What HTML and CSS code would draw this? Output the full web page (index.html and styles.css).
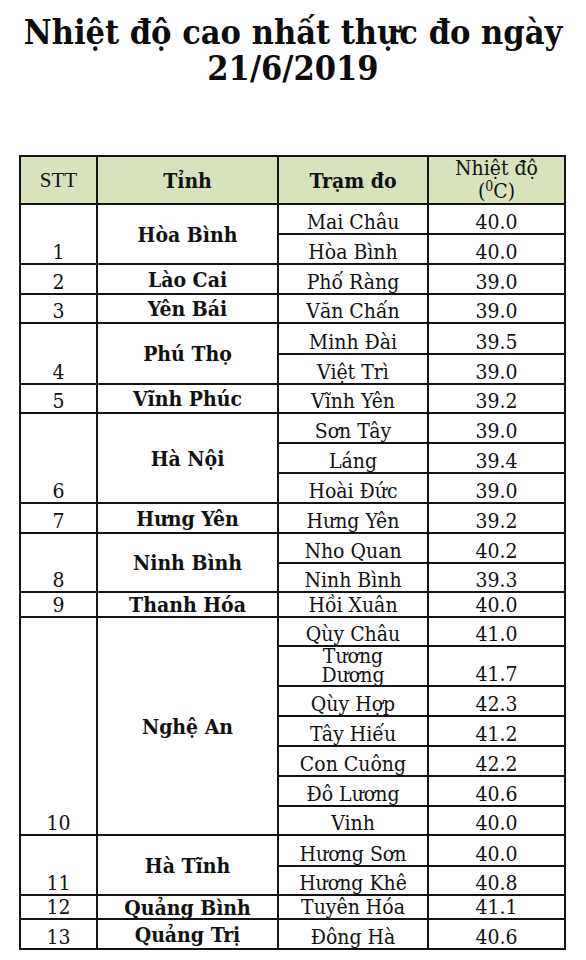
FILE: index.html
```html
<!DOCTYPE html>
<html lang="vi">
<head>
<meta charset="utf-8">
<title>Nhiệt độ cao nhất thực đo ngày 21/6/2019</title>
<link rel="stylesheet" href="styles.css">
</head>
<body>
<div class="page">
  <h1 class="title">Nhiệt độ cao nhất thực đo ngày<br>21/6/2019</h1>
  <table class="temps">
    <colgroup>
      <col class="c-stt"><col class="c-tinh"><col class="c-tram"><col class="c-nd">
    </colgroup>
    <thead>
      <tr class="h45">
        <th class="stt-h">STT</th>
        <th class="bold-h">Tỉnh</th>
        <th class="bold-h">Trạm đo</th>
        <th class="nd-h">Nhiệt độ<br>(<sup>0</sup>C)</th>
      </tr>
    </thead>
    <tbody>
      <tr class="h30"><td class="stt" rowspan="2">1</td><td class="tinh" rowspan="2">Hòa Bình</td><td class="tram">Mai Châu</td><td class="nd">40.0</td></tr>
      <tr class="h30"><td class="tram">Hòa Bình</td><td class="nd">40.0</td></tr>
      <tr class="h30"><td class="stt">2</td><td class="tinh">Lào Cai</td><td class="tram">Phố Ràng</td><td class="nd">39.0</td></tr>
      <tr class="h29"><td class="stt">3</td><td class="tinh">Yên Bái</td><td class="tram">Văn Chấn</td><td class="nd">39.0</td></tr>
      <tr class="h31"><td class="stt" rowspan="2">4</td><td class="tinh" rowspan="2">Phú Thọ</td><td class="tram">Minh Đài</td><td class="nd">39.5</td></tr>
      <tr class="h30"><td class="tram">Việt Trì</td><td class="nd">39.0</td></tr>
      <tr class="h29"><td class="stt">5</td><td class="tinh">Vĩnh Phúc</td><td class="tram">Vĩnh Yên</td><td class="nd">39.2</td></tr>
      <tr class="h30"><td class="stt" rowspan="3">6</td><td class="tinh" rowspan="3">Hà Nội</td><td class="tram">Sơn Tây</td><td class="nd">39.0</td></tr>
      <tr class="h30"><td class="tram">Láng</td><td class="nd">39.4</td></tr>
      <tr class="h30"><td class="tram">Hoài Đức</td><td class="nd">39.0</td></tr>
      <tr class="h30"><td class="stt">7</td><td class="tinh">Hưng Yên</td><td class="tram">Hưng Yên</td><td class="nd">39.2</td></tr>
      <tr class="h30"><td class="stt" rowspan="2">8</td><td class="tinh" rowspan="2">Ninh Bình</td><td class="tram">Nho Quan</td><td class="nd">40.2</td></tr>
      <tr class="h29"><td class="tram">Ninh Bình</td><td class="nd">39.3</td></tr>
      <tr class="h25"><td class="stt">9</td><td class="tinh">Thanh Hóa</td><td class="tram">Hồi Xuân</td><td class="nd">40.0</td></tr>
      <tr class="h29"><td class="stt" rowspan="7">10</td><td class="tinh" rowspan="7">Nghệ An</td><td class="tram">Qùy Châu</td><td class="nd">41.0</td></tr>
      <tr class="h39"><td class="tram two">Tương<br>Dương</td><td class="nd">41.7</td></tr>
      <tr class="h30"><td class="tram">Qùy Hợp</td><td class="nd">42.3</td></tr>
      <tr class="h30"><td class="tram">Tây Hiếu</td><td class="nd">41.2</td></tr>
      <tr class="h30"><td class="tram">Con Cuông</td><td class="nd">42.2</td></tr>
      <tr class="h30"><td class="tram">Đô Lương</td><td class="nd">40.6</td></tr>
      <tr class="h29"><td class="tram">Vinh</td><td class="nd">40.0</td></tr>
      <tr class="h31"><td class="stt" rowspan="2">11</td><td class="tinh" rowspan="2">Hà Tĩnh</td><td class="tram">Hương Sơn</td><td class="nd">40.0</td></tr>
      <tr class="h29"><td class="tram">Hương Khê</td><td class="nd">40.8</td></tr>
      <tr class="h24"><td class="stt">12</td><td class="tinh">Quảng Bình</td><td class="tram">Tuyên Hóa</td><td class="nd">41.1</td></tr>
      <tr class="h30"><td class="stt">13</td><td class="tinh">Quảng Trị</td><td class="tram">Đông Hà</td><td class="nd">40.6</td></tr>
    </tbody>
  </table>
</div>
</body>
</html>
```

FILE: styles.css
```css
html, body {
  margin: 0;
  padding: 0;
  background: #ffffff;
}

.page {
  width: 586px;
  height: 960px;
  overflow: hidden;
  font-family: "DejaVu Serif", "Liberation Serif", serif;
  font-stretch: semi-condensed;
  color: #111;
}

.title {
  margin: 14px 0 0 0;
  text-align: center;
  font-family: "DejaVu Serif", serif;
  font-stretch: semi-condensed;
  font-weight: bold;
  font-size: 34px;
  line-height: 36px;
  letter-spacing: 0;
  color: #0c0c0c;
}

.temps {
  margin: 69px 0 0 19px;
  width: 545px;
  border-collapse: collapse;
  table-layout: fixed;
}

.c-stt { width: 77px; }
.c-tinh { width: 181px; }
.c-tram { width: 150px; }
.c-nd { width: 137px; }

.temps th,
.temps td {
  border: 2px solid #141414;
  padding: 0;
  text-align: center;
  white-space: nowrap;
  overflow: visible;
}

.temps th {
  background: #d8e3bd;
  vertical-align: middle;
  font-size: 21px;
}

.stt-h {
  font-family: "Liberation Serif", serif;
  font-weight: normal;
  font-size: 23px;
}

.bold-h {
  font-weight: bold;
}

.nd-h {
  font-weight: normal;
  line-height: 23px;
  vertical-align: bottom !important;
}

.nd-h sup {
  font-size: 14px;
  vertical-align: 7px;
  line-height: 0;
}

.h45 { height: 45px; }
.h39 { height: 39px; }
.h31 { height: 31px; }
.h30 { height: 30px; }
.h29 { height: 29px; }
.h25 { height: 25px; }
.h24 { height: 24px; }

.stt,
.tram,
.nd {
  vertical-align: bottom;
  font-size: 21px;
  line-height: 21px;
}

.tinh {
  vertical-align: middle;
  font-weight: bold;
  font-size: 21px;
  line-height: 21px;
}

.tram.two {
  line-height: 19px;
}
```
